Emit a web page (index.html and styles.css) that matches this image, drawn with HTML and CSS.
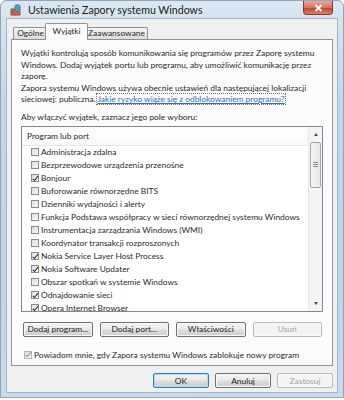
FILE: index.html
```html
<!DOCTYPE html>
<html lang="pl">
<head>
  <meta charset="UTF-8" />
  <meta name="viewport" content="width=device-width, initial-scale=1.0"/>
  <title>Ustawienia Zapory systemu Windows</title>
  <link rel="stylesheet" href="styles.css">
</head>
<body>
  <div class="window">
    <div class="titlebar">
      <svg class="app-icon" width="12" height="12" viewBox="0 0 12 12">
        <rect x="0.5" y="4.5" width="10" height="7" rx="1" fill="#9c4234"/>
        <path d="M0.5 7h10M0.5 9.3h10M3 4.5V7M7 4.5V7M5 7v2.3M9 7v2.3M3 9.3v2.2M7 9.3v2.2" stroke="#d9a08e" stroke-width="0.6"/>
        <circle cx="7.5" cy="3.5" r="3.2" fill="#3d8dd0"/>
        <path d="M5.4 2.2c1 .2 1.4 1 2.3.8.6-.2.4-1.3 1.3-1.2M6 5.3c.8-.6 1.6-.2 2.3.4" stroke="#7cc46a" stroke-width="0.9" fill="none"/>
      </svg>
      <span class="title">Ustawienia Zapory systemu Windows</span>
      <div class="close-btn">
        <svg width="9" height="8" viewBox="0 0 9 8">
          <path d="M1.5 1l6 6M7.5 1l-6 6" stroke="#fff" stroke-width="1.8"/>
        </svg>
      </div>
    </div>

    <div class="client">
      <div class="tabs">
        <div class="tab tab-general">Ogólne</div>
        <div class="tab tab-active">Wyjątki</div>
        <div class="tab tab-advanced">Zaawansowane</div>
      </div>

      <div class="panel">
        <p class="info">Wyjątki kontrolują sposób komunikowania się programów przez Zaporę systemu<br>Windows. Dodaj wyjątek portu lub programu, aby umożliwić komunikację przez<br>zaporę.</p>
        <p class="info">Zapora systemu Windows używa obecnie ustawień dla następującej lokalizacji<br>sieciowej: publiczna. <a href="#" class="link">Jakie ryzyko wiąże się z odblokowaniem programu?</a></p>
        <p class="hint">Aby włączyć wyjątek, zaznacz jego pole wyboru:</p>

        <div class="listbox">
          <div class="list-main">
            <div class="list-header">Program lub port</div>
            <div class="row"><span class="cb"></span>Administracja zdalna</div>
            <div class="row"><span class="cb"></span>Bezprzewodowe urządzenia przenośne</div>
            <div class="row"><span class="cb on"></span>Bonjour</div>
            <div class="row"><span class="cb"></span>Buforowanie równorzędne BITS</div>
            <div class="row"><span class="cb"></span>Dzienniki wydajności i alerty</div>
            <div class="row"><span class="cb"></span>Funkcja Podstawa współpracy w sieci równorzędnej systemu Windows</div>
            <div class="row"><span class="cb"></span>Instrumentacja zarządzania Windows (WMI)</div>
            <div class="row"><span class="cb"></span>Koordynator transakcji rozproszonych</div>
            <div class="row"><span class="cb on"></span>Nokia Service Layer Host Process</div>
            <div class="row"><span class="cb on"></span>Nokia Software Updater</div>
            <div class="row"><span class="cb"></span>Obszar spotkań w systemie Windows</div>
            <div class="row"><span class="cb on"></span>Odnajdowanie sieci</div>
            <div class="row"><span class="cb on"></span>Opera Internet Browser</div>
          </div>
          <div class="scrollbar">
            <div class="sb-btn"><span class="arrow-up"></span></div>
            <div class="sb-thumb"><span class="grip"></span></div>
            <div class="sb-track"></div>
            <div class="sb-btn"><span class="arrow-down"></span></div>
          </div>
        </div>

        <div class="actions">
          <button class="btn">Dodaj program...</button>
          <button class="btn">Dodaj port...</button>
          <button class="btn">Właściwości</button>
          <button class="btn" disabled>Usuń</button>
        </div>

        <div class="notify"><span class="cb on soft"></span>Powiadom mnie, gdy Zapora systemu Windows zablokuje nowy program</div>
      </div>

      <div class="dialog-buttons">
        <button class="btn btn-default">OK</button>
        <button class="btn">Anuluj</button>
        <button class="btn" disabled>Zastosuj</button>
      </div>
    </div>
  </div>
</body>
</html>
```

FILE: styles.css
```css
* {
  box-sizing: border-box;
}

body {
  margin: 0;
  background: #ffffff;
  font-family: Lato, "Open Sans", sans-serif;
  font-size: 8.4px;
  color: #2a2a2a;
}

.window {
  width: 344px;
  height: 398px;
  display: flex;
  flex-direction: column;
  padding: 0 5px 4px;
  border: 1px solid #8fa6bd;
  border-radius: 6px 6px 0 0;
  background: linear-gradient(#dbe7f2, #c3d6e9 25%, #bed2e6 70%, #c9dbec);
}

.titlebar {
  height: 18px;
  display: flex;
  align-items: center;
  padding-left: 4px;
}

.app-icon {
  margin-right: 6px;
}

.title {
  font-size: 10.6px;
  color: #1b1b1b;
}

.close-btn {
  margin-left: auto;
  margin-right: 5px;
  align-self: flex-start;
  width: 30px;
  height: 14px;
  display: flex;
  align-items: center;
  justify-content: center;
  border: 1px solid #8a3b31;
  border-top: none;
  border-radius: 0 0 4px 4px;
  background: linear-gradient(#eba99b, #d9725f 50%, #c8442f 55%, #dc7e68);
}

.client {
  flex: 1;
  display: flex;
  flex-direction: column;
  padding: 5px 4px 4px;
  background: #f0f0f0;
  border: 1px solid #a3b7cb;
}

/* tabs */
.tabs {
  height: 15px;
  display: flex;
  align-items: flex-end;
  padding-left: 2px;
}

.tab {
  height: 12px;
  line-height: 11px;
  text-align: center;
  border: 1px solid #8e9298;
  border-bottom: none;
  border-radius: 2px 2px 0 0;
  background: linear-gradient(#f5f5f5, #e9e9e9 50%, #dcdcdc);
  margin-left: -1px;
}

.tab-general {
  width: 35px;
  margin-left: 0;
}

.tab-active {
  position: relative;
  z-index: 1;
  width: 43px;
  height: 17px;
  line-height: 14px;
  margin: 0 -2px -1px -3px;
  background: #fbfbfb;
}

.tab-advanced {
  width: 63px;
}

.panel {
  height: 327px;
  padding: 8px 9px 0;
  border: 1px solid #8e9298;
  background: #fbfbfb;
}

.info,
.hint {
  margin: 0;
  line-height: 11.5px;
  white-space: nowrap;
}

.hint {
  margin-top: 6.5px;
}

.link {
  color: #2f6db5;
  text-decoration: underline;
  outline: 1px dotted #6f6f6f;
}

/* list */
.listbox {
  width: 302px;
  height: 186px;
  margin-top: 2px;
  display: flex;
  border: 1px solid #828790;
  background: #ffffff;
  overflow: hidden;
}

.list-main {
  flex: 1;
  overflow: hidden;
}

.list-header {
  height: 19px;
  line-height: 18px;
  padding-left: 5px;
  border-bottom: 1px solid #e3e6ea;
  background: linear-gradient(#ffffff, #f7f8f9);
}

.row {
  height: 13px;
  display: flex;
  align-items: center;
  padding-left: 9px;
  white-space: nowrap;
}

.cb {
  position: relative;
  flex: none;
  width: 8px;
  height: 8px;
  margin-right: 2px;
  border: 1px solid #8a8a8a;
  background: linear-gradient(135deg, #dedede, #f8f8f8);
}

.cb.on::after {
  content: "";
  position: absolute;
  left: 1.6px;
  top: -0.5px;
  width: 2.4px;
  height: 4.6px;
  border: solid #1e2a3a;
  border-width: 0 1.6px 1.6px 0;
  transform: rotate(40deg);
}

.cb.soft {
  border-color: #b5b5b5;
}

.cb.soft::after {
  border-color: #7d8fa6;
}

/* scrollbar */
.scrollbar {
  width: 14px;
  display: flex;
  flex-direction: column;
  padding: 0 1px;
  background: #f4f4f4;
  border-left: 1px solid #e8e8e8;
}

.sb-btn {
  height: 15px;
  display: flex;
  align-items: center;
  justify-content: center;
}

.sb-btn:last-child {
  height: 14px;
}

.arrow-up,
.arrow-down {
  width: 0;
  height: 0;
  border-left: 2.5px solid transparent;
  border-right: 2.5px solid transparent;
}

.arrow-up {
  border-bottom: 3px solid #4e4e4e;
}

.arrow-down {
  border-top: 3px solid #4e4e4e;
}

.sb-thumb {
  height: 46px;
  display: flex;
  align-items: center;
  justify-content: center;
  border: 1px solid #a5a5a5;
  border-radius: 2px;
  background: linear-gradient(to right, #f6f6f6, #e6e6e6);
}

.grip {
  width: 5px;
  height: 5px;
  background: repeating-linear-gradient(#8a8a8a 0 1px, transparent 1px 2px);
}

.sb-track {
  flex: 1;
}

/* buttons */
.btn {
  height: 15px;
  padding: 0;
  font-family: inherit;
  font-size: 8.4px;
  color: #1e1e1e;
  border: 1px solid #707070;
  border-radius: 2px;
  background: linear-gradient(#f3f3f3, #ebebeb 48%, #dddddd 52%, #cfcfcf);
  box-shadow: inset 0 0 0 1px #fafafa;
}

.btn:disabled {
  color: #a3a3a3;
  border-color: #b6b9bc;
  background: #f4f4f4;
}

.btn-default {
  border-color: #3d7bad;
  box-shadow: inset 0 0 0 1px #a6dcf6;
}

.actions {
  display: flex;
  gap: 7px;
  margin-top: 10px;
  padding: 0 1px 0 2px;
}

.actions .btn {
  flex: 1;
}

.notify {
  display: flex;
  align-items: center;
  height: 12px;
  margin-top: 12px;
  padding-left: 3px;
  white-space: nowrap;
}

.dialog-buttons {
  display: flex;
  justify-content: flex-end;
  gap: 6px;
  margin-top: 7px;
}

.dialog-buttons .btn {
  width: 56px;
}
```
